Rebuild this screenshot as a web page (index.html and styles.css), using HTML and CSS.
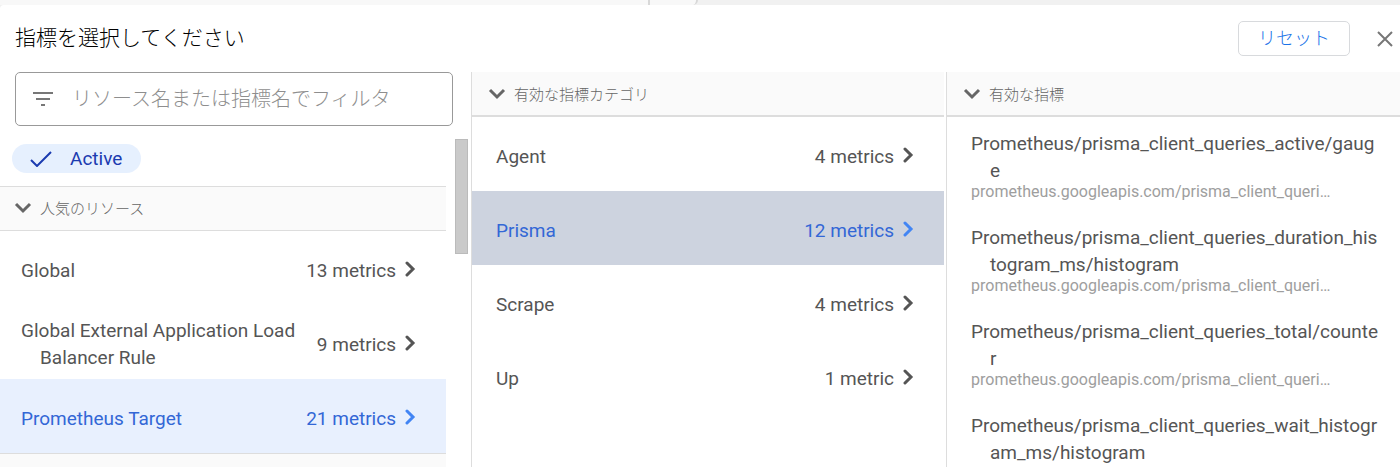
FILE: index.html
```
<!DOCTYPE html>
<html lang="ja">
<head>
    <meta charset="UTF-8">
    <meta name="viewport" content="width=device-width, initial-scale=1.0">
    <title>指標を選択してください</title>
    <link rel="stylesheet" href="styles.css">
</head>
<body>
<svg class="icon-defs" aria-hidden="true">
    <symbol id="chevron-down" viewBox="0 0 18 12"><path d="M2 2l7 7 7-7" fill="none" stroke="currentColor" stroke-width="3"/></symbol>
    <symbol id="chevron-right" viewBox="0 0 12 16"><path d="M3 2l6 6-6 6" fill="none" stroke="currentColor" stroke-width="3" stroke-linecap="round"/></symbol>
</svg>
<div class="backdrop">
    <div class="backdrop-tab"></div>
    <div class="backdrop-tab backdrop-tab-end"></div>
</div>
<main class="dialog">
    <header class="dialog-header">
        <h1>指標を選択してください</h1>
        <button type="button" class="reset-btn">リセット</button>
        <button type="button" class="close-btn" aria-label="閉じる">
            <svg width="16" height="16" viewBox="0 0 16 16"><path d="M1 1l14 14M15 1L1 15" fill="none" stroke="currentColor" stroke-width="2"/></svg>
        </button>
    </header>
    <div class="columns">
        <section class="column resources">
            <div class="filter">
                <svg width="20" height="14" viewBox="0 0 20 14"><path d="M0 1h20M3 7h14M8 13h4" fill="none" stroke="currentColor" stroke-width="2"/></svg>
                <input type="text" aria-label="フィルタ" placeholder="リソース名または指標名でフィルタ">
            </div>
            <div class="scroll-area">
                <div class="scroll-content">
                    <button type="button" class="chip" aria-pressed="true">
                        <svg width="22" height="16" viewBox="0 0 22 16"><path d="M1 9l6 6L21 1" fill="none" stroke="currentColor" stroke-width="2"/></svg>
                        <span>Active</span>
                    </button>
                    <h2 class="section-title"><svg class="icon-down"><use href="#chevron-down"/></svg>人気のリソース</h2>
                    <button type="button" class="row">
                        <span class="row-name">Global</span>
                        <span class="row-count">13 metrics</span>
                        <svg class="icon-right"><use href="#chevron-right"/></svg>
                    </button>
                    <button type="button" class="row">
                        <span class="row-name">Global External Application Load Balancer Rule</span>
                        <span class="row-count">9 metrics</span>
                        <svg class="icon-right"><use href="#chevron-right"/></svg>
                    </button>
                    <button type="button" class="row selected">
                        <span class="row-name">Prometheus Target</span>
                        <span class="row-count">21 metrics</span>
                        <svg class="icon-right"><use href="#chevron-right"/></svg>
                    </button>
                    <div class="section-title"></div>
                </div>
                <div class="scrollbar"><div class="scroll-thumb"></div></div>
            </div>
        </section>
        <section class="column categories">
            <h2 class="section-title"><svg class="icon-down"><use href="#chevron-down"/></svg>有効な指標カテゴリ</h2>
            <button type="button" class="row">
                <span class="row-name">Agent</span>
                <span class="row-count">4 metrics</span>
                <svg class="icon-right"><use href="#chevron-right"/></svg>
            </button>
            <button type="button" class="row selected">
                <span class="row-name">Prisma</span>
                <span class="row-count">12 metrics</span>
                <svg class="icon-right"><use href="#chevron-right"/></svg>
            </button>
            <button type="button" class="row">
                <span class="row-name">Scrape</span>
                <span class="row-count">4 metrics</span>
                <svg class="icon-right"><use href="#chevron-right"/></svg>
            </button>
            <button type="button" class="row">
                <span class="row-name">Up</span>
                <span class="row-count">1 metric</span>
                <svg class="icon-right"><use href="#chevron-right"/></svg>
            </button>
        </section>
        <section class="column metrics">
            <h2 class="section-title"><svg class="icon-down"><use href="#chevron-down"/></svg>有効な指標</h2>
            <button type="button" class="metric">
                <span class="metric-name">Prometheus/prisma_client_queries_active/gauge</span>
                <span class="metric-path">prometheus.googleapis.com/prisma_client_queri…</span>
            </button>
            <button type="button" class="metric">
                <span class="metric-name">Prometheus/prisma_client_queries_duration_histogram_ms/histogram</span>
                <span class="metric-path">prometheus.googleapis.com/prisma_client_queri…</span>
            </button>
            <button type="button" class="metric">
                <span class="metric-name">Prometheus/prisma_client_queries_total/counter</span>
                <span class="metric-path">prometheus.googleapis.com/prisma_client_queri…</span>
            </button>
            <button type="button" class="metric">
                <span class="metric-name">Prometheus/prisma_client_queries_wait_histogram_ms/histogram</span>
            </button>
        </section>
    </div>
</main>
</body>
</html>
```
FILE: styles.css
```
* {
    margin: 0;
    padding: 0;
    box-sizing: border-box;
}
body {
    font-family: Roboto, "Noto Sans CJK JP", sans-serif;
    font-size: 19px;
    line-height: 27px;
    color: #555;
    background: #f1f1f1;
    height: 100vh;
    display: flex;
    flex-direction: column;
    overflow: hidden;
}
button {
    font: inherit;
    color: inherit;
    background: none;
    border: none;
    text-align: left;
    cursor: pointer;
}
svg {
    flex-shrink: 0;
}
.icon-defs {
    position: absolute;
    width: 0;
    height: 0;
}
.backdrop {
    display: flex;
    flex: 0 0 5px;
}
.backdrop-tab {
    width: 650px;
    background: #f8f8f8;
    border-right: 2px solid #d8d8d8;
}
.backdrop-tab-end {
    width: 48px;
    border-bottom-right-radius: 5px;
}
.dialog {
    flex: 1;
    min-height: 0;
    display: flex;
    flex-direction: column;
    background: #fff;
    border-top-left-radius: 4px;
}
.dialog-header {
    display: flex;
    align-items: center;
    height: 67px;
    padding: 0 7px 0 15px;
    flex-shrink: 0;
}
.dialog-header h1 {
    flex: 1;
    font-size: 21px;
    font-weight: 300;
    color: #000;
}
.reset-btn {
    height: 35px;
    padding: 0 19px;
    font-size: 18px;
    font-weight: 300;
    color: #1a73e8;
    border: 1px solid #d8dadd;
    border-radius: 5px;
}
.close-btn {
    display: flex;
    margin-left: 27px;
    color: #777;
}
.columns {
    flex: 1;
    min-height: 0;
    display: grid;
    grid-template-columns: 471fr 475fr 454fr;
}
.column {
    min-width: 0;
    overflow: hidden;
}
.categories,
.metrics {
    border-left: 1px solid #ddd;
}
.categories {
    padding-right: 2px;
}

/* left column */
.resources {
    display: flex;
    flex-direction: column;
}
.filter {
    display: flex;
    align-items: center;
    gap: 19px;
    height: 54px;
    margin: 0 18px 13px 15px;
    padding: 0 17px;
    border: 1px solid #999;
    border-radius: 5px;
    flex-shrink: 0;
    color: #777;
}
.filter input {
    flex: 1;
    min-width: 0;
    border: none;
    outline: none;
    background: none;
    font: inherit;
    font-size: 20px;
    font-weight: 300;
}
.filter input::placeholder {
    color: #8e8e8e;
    opacity: 1;
}
.scroll-area {
    flex: 1;
    min-height: 0;
    display: flex;
    gap: 9px;
}
.scroll-content {
    flex: 1;
    min-width: 0;
    overflow: hidden;
}
.scrollbar {
    width: 16px;
    padding-right: 3px;
}
.scroll-thumb {
    height: 115px;
    background: #cacaca;
    border: 1px solid #bbb;
}
.chip {
    display: flex;
    align-items: center;
    gap: 18px;
    height: 29px;
    margin: 5px 0 13px 12px;
    padding: 0 19px 0 18px;
    border-radius: 15px;
    background: #e6f0fe;
    color: #1b3bb0;
}
.section-title {
    display: flex;
    align-items: center;
    gap: 8px;
    height: 45px;
    padding: 2px 14px 0;
    font-size: 15px;
    font-weight: 300;
    color: #666;
    background: #fafafa;
    border-top: 1px solid #ddd;
    border-bottom: 1px solid #ddd;
}
.categories .section-title,
.metrics .section-title {
    padding: 4px 16px 0;
    border-top: none;
    border-bottom-width: 2px;
}
.icon-down {
    width: 18px;
    height: 12px;
    margin-bottom: 4px;
}
.icon-right {
    width: 12px;
    height: 16px;
    margin-bottom: 2px;
}
.row {
    display: flex;
    align-items: center;
    width: 100%;
    height: 74px;
    padding: 4px 30px 0 21px;
}
.categories .row {
    padding-left: 24px;
}
.row-name {
    flex: 1;
    padding-left: 19px;
    text-indent: -19px;
}
.row-count {
    margin: 0 8px 0 16px;
    white-space: nowrap;
}
.row.selected {
    color: #3367d6;
    background: #e8f0fe;
}
.row.selected .icon-right {
    color: #4285f4;
}
.categories .row.selected {
    background: #cdd3df;
}

/* right column */
.metric {
    display: block;
    width: 100%;
    padding: 13px 17px 11px 24px;
}
.metric-name {
    display: block;
    padding-left: 19px;
    text-indent: -19px;
    word-break: break-all;
}
.metric-path {
    display: block;
    font-size: 16px;
    line-height: 16px;
    color: #9e9e9e;
    white-space: nowrap;
}
```
